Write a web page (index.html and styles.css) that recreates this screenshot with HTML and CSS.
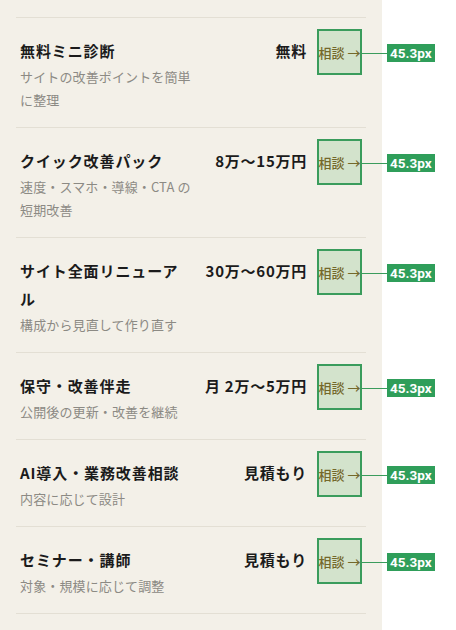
FILE: index.html
```html
<!DOCTYPE html>
<html lang="ja">

<head>
    <meta charset="UTF-8" />
    <meta name="viewport" content="width=device-width, initial-scale=1.0" />
    <title>料金プラン</title>
    <link rel="stylesheet" href="styles.css">
</head>

<body>
    <div class="panel">
        <ul class="plans">
            <li class="plan">
                <div class="plan-info">
                    <h3 class="plan-name">無料ミニ診断</h3>
                    <p class="plan-desc">サイトの改善ポイントを簡単に整理</p>
                </div>
                <div class="plan-price">無料</div>
                <a class="plan-cta" href="#">相談 →<span class="measure"><span class="measure-line"></span><span class="measure-tag">45.3px</span></span></a>
            </li>
            <li class="plan">
                <div class="plan-info">
                    <h3 class="plan-name">クイック改善パック</h3>
                    <p class="plan-desc">速度・スマホ・導線・CTA の短期改善</p>
                </div>
                <div class="plan-price">8万〜15万円</div>
                <a class="plan-cta" href="#">相談 →<span class="measure"><span class="measure-line"></span><span class="measure-tag">45.3px</span></span></a>
            </li>
            <li class="plan">
                <div class="plan-info">
                    <h3 class="plan-name">サイト全面リニューアル</h3>
                    <p class="plan-desc">構成から見直して作り直す</p>
                </div>
                <div class="plan-price">30万〜60万円</div>
                <a class="plan-cta" href="#">相談 →<span class="measure"><span class="measure-line"></span><span class="measure-tag">45.3px</span></span></a>
            </li>
            <li class="plan">
                <div class="plan-info">
                    <h3 class="plan-name">保守・改善伴走</h3>
                    <p class="plan-desc">公開後の更新・改善を継続</p>
                </div>
                <div class="plan-price">月 2万〜5万円</div>
                <a class="plan-cta" href="#">相談 →<span class="measure"><span class="measure-line"></span><span class="measure-tag">45.3px</span></span></a>
            </li>
            <li class="plan">
                <div class="plan-info">
                    <h3 class="plan-name">AI導入・業務改善相談</h3>
                    <p class="plan-desc">内容に応じて設計</p>
                </div>
                <div class="plan-price">見積もり</div>
                <a class="plan-cta" href="#">相談 →<span class="measure"><span class="measure-line"></span><span class="measure-tag">45.3px</span></span></a>
            </li>
            <li class="plan">
                <div class="plan-info">
                    <h3 class="plan-name">セミナー・講師</h3>
                    <p class="plan-desc">対象・規模に応じて調整</p>
                </div>
                <div class="plan-price">見積もり</div>
                <a class="plan-cta" href="#">相談 →<span class="measure"><span class="measure-line"></span><span class="measure-tag">45.3px</span></span></a>
            </li>
        </ul>
    </div>
</body>

</html>
```

FILE: styles.css
```css
body {
    margin: 0;
    padding: 0;
    background-color: #ffffff;
    font-family: "Noto Sans CJK JP", "Noto Sans", sans-serif;
    color: #1b1b1b;
}

.panel {
    box-sizing: border-box;
    width: 382px;
    min-height: 100vh;
    padding: 17px 16px 17px;
    background-color: #f3f0e8;
}

.plans {
    list-style: none;
    margin: 0;
    padding: 0;
    border-bottom: 1px solid #e3dfd4;
}

.plan {
    display: grid;
    grid-template-columns: 172px 1fr 45px;
    column-gap: 12px;
    align-items: start;
    padding: 19px 4px 16px;
    border-top: 1px solid #e3dfd4;
}

.plan-name {
    margin: 0;
    font-size: 15px;
    font-weight: 700;
    line-height: 28px;
    letter-spacing: 0.06em;
}

.plan-desc {
    margin: 0;
    font-size: 13px;
    line-height: 23px;
    letter-spacing: 0.01em;
    color: #8c8a84;
}

.plan-price {
    justify-self: end;
    margin-right: -2px;
    font-size: 15px;
    font-weight: 700;
    line-height: 28px;
    letter-spacing: 0.05em;
    white-space: nowrap;
}

.plan-cta {
    position: relative;
    box-sizing: border-box;
    display: flex;
    align-items: center;
    justify-content: center;
    width: 45px;
    height: 46px;
    margin-top: -8px;
    border: 2px solid #3a9c5c;
    background-color: #d3e3cc;
    color: #74682b;
    font-size: 13px;
    font-weight: 500;
    text-decoration: none;
    white-space: nowrap;
}

/* dev overlay: size readout next to the button */
.measure {
    position: absolute;
    top: 13px;
    left: 43px;
    display: flex;
    align-items: center;
}

.measure-line {
    width: 25px;
    height: 1px;
    background-color: #3a9c5c;
}

.measure-tag {
    padding: 0 3px;
    background-color: #2f9e5a;
    color: #ffffff;
    font-family: Roboto, "Liberation Sans", sans-serif;
    font-size: 13.5px;
    font-weight: 700;
    line-height: 18px;
}
```
